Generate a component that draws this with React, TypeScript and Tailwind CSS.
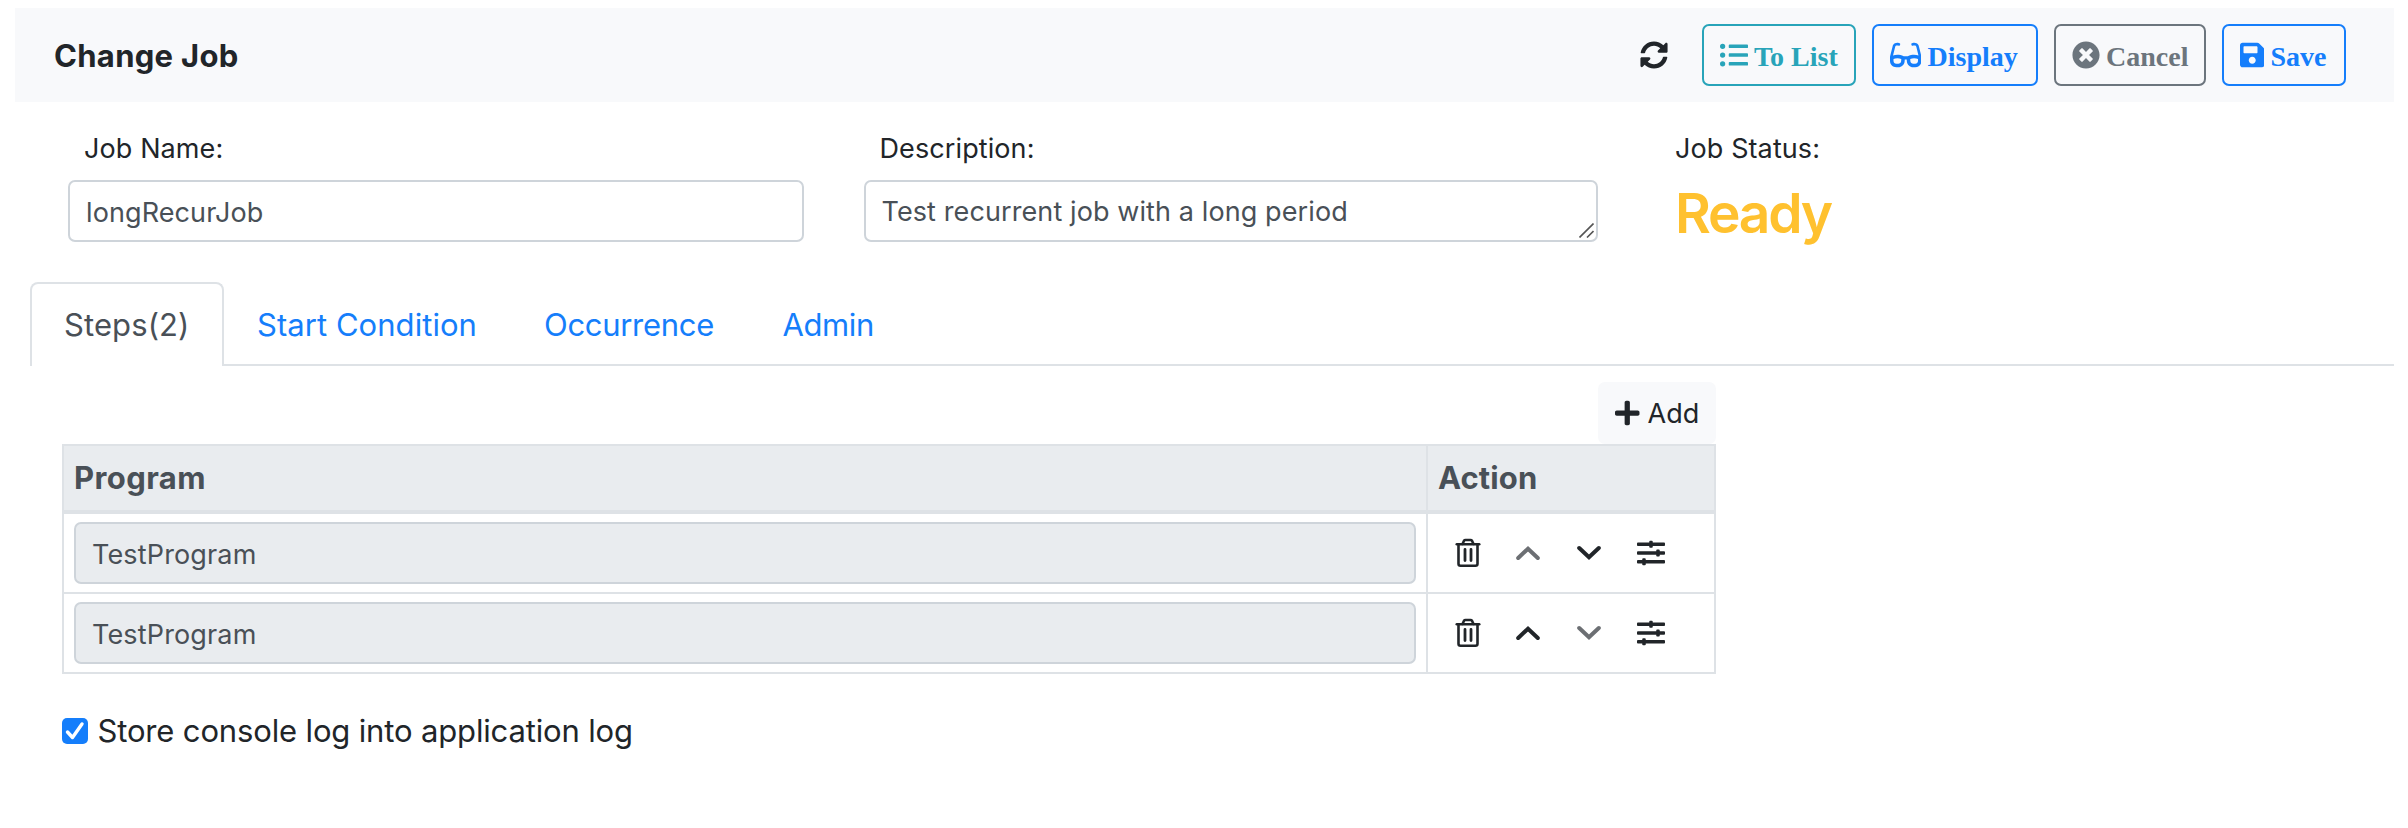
import type { ReactNode } from "react";
import { FaSyncAlt, FaListUl, FaGlasses, FaTimesCircle, FaSave, FaPlus, FaSlidersH } from "react-icons/fa";

function ToolButton({ icon, className, children }: { icon: ReactNode; className: string; children: ReactNode }) {
  return (
    <button
      className={`flex h-[62px] items-center gap-[6.5px] rounded-[7px] border-2 pl-[15.5px] font-['Liberation_Serif',serif] text-[28px] leading-[42px] font-bold whitespace-nowrap ${className}`}
    >
      {icon}
      <span className="pt-[3px]">{children}</span>
    </button>
  );
}

function Trash() {
  return (
    <svg width="26" height="30" viewBox="0 0 26 30" fill="none" stroke="currentColor" strokeWidth="2.6" strokeLinecap="round" strokeLinejoin="round">
      <path d="M1.8 6.2H24.2" />
      <path d="M7.5 6L9 2.8Q9.5 2 10.5 2H15.5Q16.5 2 17 2.8L18.5 6" />
      <path d="M3.5 6.5V25.8Q3.5 27.8 5.5 27.8H20.5Q22.5 27.8 22.5 25.8V6.5" />
      <path d="M10 11.5V22.5M16 11.5V22.5" strokeWidth="2.8" />
    </svg>
  );
}

function Chevron({ up, muted }: { up?: boolean; muted?: boolean }) {
  return (
    <svg width="24" height="16" viewBox="0 0 24 16" fill="none" stroke={muted ? "#6c6f73" : "#212529"} strokeWidth="4" strokeLinecap="round" strokeLinejoin="miter">
      <path d={up ? "M2.2 13L12 3.7L21.8 13" : "M2.2 3L12 12.3L21.8 3"} />
    </svg>
  );
}

function StepRow({ first }: { first?: boolean }) {
  return (
    <div className="flex h-20 border-b-2 border-[#dee2e6]">
      <div className="w-[1364px] border-r-2 border-[#dee2e6] px-2.5 py-2">
        <input
          readOnly
          defaultValue="TestProgram"
          className="block h-[62px] w-full rounded-[7px] border-2 border-[#ced4da] bg-[#e9ecef] px-4 pt-[2px] text-[27px] tracking-[0.15px] text-[#495057] outline-none"
        />
      </div>
      <div className="flex flex-1 items-center pl-[27px]">
        <Trash />
        <span className="ml-[35px]"><Chevron up muted={first} /></span>
        <span className="ml-[37px]"><Chevron muted={!first} /></span>
        <FaSlidersH className="ml-9 size-7" />
      </div>
    </div>
  );
}

export default function App() {
  return (
    <div className="min-h-[828px] bg-white pt-2 pl-[15px] font-['Inter',sans-serif] text-[#212529]">
      <header className="flex h-[94px] w-[2379px] items-center bg-[#f8f9fb] pr-12 pl-[39px]">
        <h1 className="mr-auto pt-[3px] text-[31px] font-bold tracking-[0.3px]">Change Job</h1>
        <FaSyncAlt className="mr-[34px] size-7" />
        <div className="flex gap-4">
          <ToolButton icon={<FaListUl className="size-7" />} className="w-[154px] border-[#28a4b9] text-[#28a4b9]">
            To List
          </ToolButton>
          <ToolButton icon={<FaGlasses className="h-7 w-[31.5px]" />} className="w-[166px] border-[#157efb] text-[#157efb]">
            Display
          </ToolButton>
          <ToolButton icon={<FaTimesCircle className="size-7" />} className="w-[152px] border-[#6c757d] text-[#6c757d]">
            Cancel
          </ToolButton>
          <ToolButton icon={<FaSave className="h-7 w-[24.5px]" />} className="w-[124px] border-[#157efb] text-[#157efb]">
            Save
          </ToolButton>
        </div>
      </header>

      <section className="flex h-[180px] pt-[26px] pl-[53px] text-[27px] leading-[42px] tracking-[0.1px]">
        <div className="w-[796px]">
          <label className="block pl-4">Job Name:</label>
          <input
            defaultValue="longRecurJob"
            className="mt-[10px] block h-[62px] w-[736px] rounded-[7px] border-2 border-[#ced4da] px-4 pt-[2px] text-[#495057] outline-none"
          />
        </div>
        <div className="w-[811px]">
          <label className="block pl-[15.5px]">Description:</label>
          <div className="relative mt-[10px] w-[734px]">
            <textarea
              rows={1}
              defaultValue="Test recurrent job with a long period"
              className="block h-[62px] w-full resize-none overflow-hidden rounded-[7px] border-2 border-[#ced4da] px-[15.5px] pt-[9px] text-[#495057] outline-none"
            />
            <svg className="absolute right-1 bottom-1" width="15" height="15" viewBox="0 0 15 15" stroke="#555" strokeWidth="1.6">
              <path d="M0.5 14.5L14.5 0.5M8 14.5L14.5 8" />
            </svg>
          </div>
        </div>
        <div>
          <div>Job Status:</div>
          <div className="mt-[10px] text-[55px] leading-[66px] font-semibold tracking-[-2.2px] text-[#ffc12f]">Ready</div>
        </div>
      </section>

      <nav className="ml-[15px] flex h-[84px] w-[2364px] text-[31px] leading-[48px] tracking-[-0.1px] text-[#157efb]">
        <div className="w-[194px] rounded-t-[8px] border-2 border-b-0 border-[#dee2e6] pt-[17px] pl-8 tracking-[0.1px] text-[#495057]">Steps(2)</div>
        <div className="flex flex-1 border-b-2 border-[#dee2e6] pt-[19px]">
          <a className="w-[287px] pl-[33px] tracking-[0.05px]">Start Condition</a>
          <a className="w-[239px] pl-[33px] tracking-[-0.3px]">Occurrence</a>
          <a className="pl-[32.5px] tracking-[-0.4px]">Admin</a>
        </div>
      </nav>

      <main className="ml-[47px] w-[1654px] pt-4">
        <div className="flex h-[62px] justify-end">
          <button className="flex h-[62px] w-[118px] items-center gap-[8px] rounded-[7px] bg-[#f8f9fb] pl-[17px] text-[27px]">
            <FaPlus className="h-7 w-[24.5px]" />
            <span className="pt-[2px]">Add</span>
          </button>
        </div>
        <div className="border-x-2 border-t-2 border-[#dee2e6]">
          <div className="flex h-[68px] border-b-4 border-[#dee2e6] bg-[#e9ecef] text-[31px] leading-[64px] font-bold text-[#495057]">
            <div className="w-[1364px] border-r-2 border-[#dee2e6] pl-2.5 tracking-[0.4px]">Program</div>
            <div className="pl-2.5 tracking-[0.1px]">Action</div>
          </div>
          <StepRow first />
          <StepRow />
        </div>
        <label className="mt-[33px] flex h-[48px] items-center text-[31px] leading-[48px] tracking-[-0.15px]">
          <svg className="mr-[9.5px]" width="26" height="26" viewBox="0 0 26 26" fill="none">
            <rect width="26" height="26" rx="5" fill="#157efb" />
            <path d="M5.5 14L10.5 19.5L20 6" stroke="white" strokeWidth="3.4" strokeLinecap="round" strokeLinejoin="round" />
          </svg>
          Store console log into application log
        </label>
      </main>
    </div>
  );
}
